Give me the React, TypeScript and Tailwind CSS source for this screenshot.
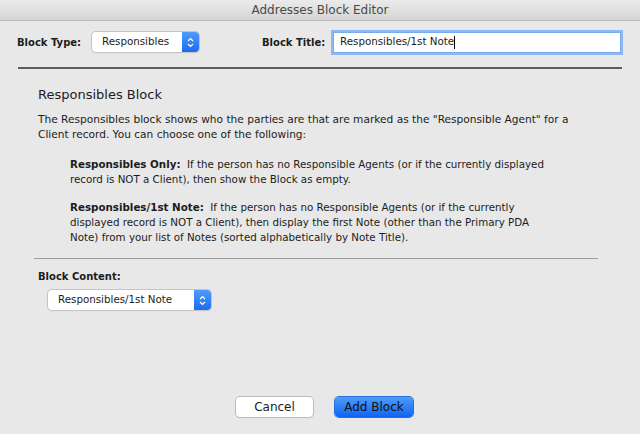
import type { ReactNode } from "react";

const font = { fontFamily: '"DejaVu Sans", "Liberation Sans", sans-serif' };

function Stepper() {
  return (
    <svg width="7" height="11" viewBox="0 0 7 11" fill="none">
      <path d="M1 4 L3.5 1.5 L6 4" stroke="white" strokeWidth="1.2" />
      <path d="M1 7 L3.5 9.5 L6 7" stroke="white" strokeWidth="1.2" />
    </svg>
  );
}

function PopUp({ label, width }: { label: string; width: string }) {
  return (
    <div
      className={`${width} h-[20px] flex rounded-[4px] bg-white shadow-[0_0_0_1px_#c4c4c4,0_1px_1px_rgba(0,0,0,0.15)] overflow-hidden`}
    >
      <div className="flex-1 flex items-center pl-[10px] text-[10.3px] text-[#1c1c1c]">
        {label}
      </div>
      <div className="w-[17px] flex items-center justify-center bg-gradient-to-b from-[#4d9bfb] to-[#1a6cf2]">
        <Stepper />
      </div>
    </div>
  );
}

function Option({ title, children }: { title: string; children: ReactNode }) {
  return (
    <p className="text-[10.3px] leading-[15px] text-[#1c1c1c] whitespace-nowrap">
      <span className="font-bold">{title}</span>&nbsp; {children}
    </p>
  );
}

export default function App() {
  return (
    <div
      className="w-[640px] h-[434px] bg-[#e8e8e8] flex flex-col overflow-hidden"
      style={font}
    >
      <div className="h-[21px] flex items-center justify-center bg-gradient-to-b from-[#ebebeb] to-[#d5d5d5] border-b border-[#b9b9b9] text-[12px] text-[#4a4a4a]">
        Addresses Block Editor
      </div>

      <div className="flex items-center h-[22px] mt-[10px] pl-[17px]">
        <span className="text-[10px] font-bold text-[#1c1c1c] w-[75px]">
          Block Type:
        </span>
        <PopUp label="Responsibles" width="w-[107px]" />
        <span className="ml-[63px] text-[10px] font-bold text-[#1c1c1c] w-[71px]">
          Block Title:
        </span>
        <div className="w-[288px] h-[21px] bg-white border border-[#7aaaf0] shadow-[0_0_0_2px_#8db8f5] flex items-center pl-[6px] text-[10.3px] text-[#1c1c1c]">
          Responsibles/1st Note
          <span className="w-px h-[13px] bg-black" />
        </div>
      </div>

      <div className="mt-[14px] ml-[18px] w-[604px] h-[2px] bg-[#5e5e5e]" />

      <div className="pl-[38px]">
        <h2 className="mt-[17px] text-[13px] leading-[18px] text-[#1c1c1c]">
          Responsibles Block
        </h2>
        <p className="mt-[8px] text-[10.6px] leading-[15px] text-[#1c1c1c] whitespace-nowrap">
          The Responsibles block shows who the parties are that are marked as the "Responsible Agent" for a
          <br />
          Client record. You can choose one of the following:
        </p>

        <div className="pl-[32px] mt-[15px]">
          <Option title="Responsibles Only:">
            If the person has no Responsible Agents (or if the currently displayed
            <br />
            record is NOT a Client), then show the Block as empty.
          </Option>
          <div className="mt-[13px]">
            <Option title="Responsibles/1st Note:">
              If the person has no Responsible Agents (or if the currently
              <br />
              displayed record is NOT a Client), then display the first Note (other than the Primary PDA
              <br />
              Note) from your list of Notes (sorted alphabetically by Note Title).
            </Option>
          </div>
        </div>
      </div>

      <div className="mt-[13px] ml-[34px] w-[564px] h-px bg-[#9c9c9c]" />

      <div className="pl-[38px] mt-[10px] text-[10px] font-bold leading-[15px] text-[#1c1c1c]">
        Block Content:
      </div>
      <div className="pl-[48px] mt-[6px]">
        <PopUp label="Responsibles/1st Note" width="w-[163px]" />
      </div>

      <div className="flex-1" />

      <div className="flex justify-center gap-[22px] mb-[17px] pl-[9px]">
        <button className="w-[77px] h-[20px] rounded-[4px] bg-white shadow-[0_0_0_1px_#bcbcbc,0_1px_1px_rgba(0,0,0,0.15)] text-[12px] text-[#1c1c1c]">
          Cancel
        </button>
        <button className="w-[78px] h-[20px] rounded-[4px] bg-gradient-to-b from-[#4d9bfb] to-[#0d63f3] shadow-[0_0_0_1px_#2a6fe0] text-[12px] text-[#111]">
          Add Block
        </button>
      </div>
    </div>
  );
}
